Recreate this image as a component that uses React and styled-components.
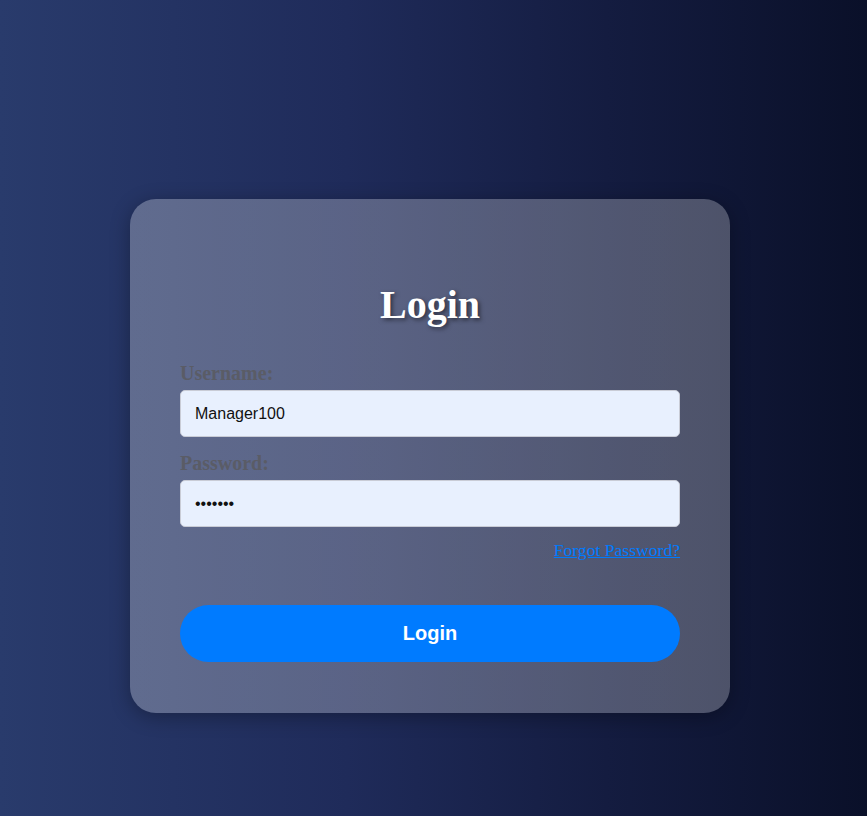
import React from 'react'
import styled, { createGlobalStyle } from 'styled-components';

const GlobalStyle = createGlobalStyle`
    * {
        box-sizing: border-box;
    }
    body {
        margin: 0;
        min-height: 100vh;
        font-family: "Liberation Serif", "Times New Roman", serif;
        background: linear-gradient(to right, #293b6c 0%, #1f2b5a 40%, #141c40 70%, #0a1029 100%);
    }
`;

export default function App() {
    return (
        <>
        <GlobalStyle />
        <Page>
            <Card>
                <Title>Login</Title>
                <Field>
                    <Label htmlFor="username">Username:</Label>
                    <Input id="username" type="text" defaultValue="Manager100" />
                </Field>
                <Field>
                    <Label htmlFor="password">Password:</Label>
                    <Input id="password" type="password" defaultValue="1234567" />
                </Field>
                <Forgot>
                    <a href="#">Forgot Password?</a>
                </Forgot>
                <Button type="button">Login</Button>
            </Card>
        </Page>
        </>
    );
};

const Page = styled.div `
    padding: 199px 0 0 130px;
`;
const Card = styled.div `
    width: 600px;
    padding: 50px 50px 51px;
    border-radius: 26px;
    background: linear-gradient(to right, rgba(255,255,255,0.27), rgba(255,255,255,0.26));
    box-shadow: 0 4px 20px rgba(0, 0, 0, 0.3);
`;
const Title = styled.h2 `
    margin: 33px 0 34px;
    font-size: 40px;
    line-height: 46px;
    font-weight: 700;
    text-align: center;
    color: #fff;
    text-shadow: 2px 2px 4px rgba(0, 0, 0, 0.5);
`;
const Field = styled.div `
    display: flex;
    flex-direction: column;
    margin-bottom: 15px;
`;
const Label = styled.label `
    font-size: 20px;
    line-height: 23px;
    font-weight: 700;
    color: #5a5c66;
    margin-bottom: 5px;
`;
const Input = styled.input `
    width: 100%;
    height: 47px;
    padding: 0 14px;
    border: 1px solid #c9ccd6;
    border-radius: 5px;
    background: #e8f0fe;
    color: #111;
    font-family: "Liberation Sans", Arial, sans-serif;
    font-size: 16px;
    outline: none;
`;
const Forgot = styled.div `
    text-align: right;
    margin-top: -2px;
    line-height: 20px;
    a {
        font-size: 17.6px;
        color: #007bff;
        text-decoration: underline;
    }
`;
const Button = styled.button `
    display: block;
    width: 100%;
    height: 57px;
    margin-top: 44px;
    border: none;
    border-radius: 30px;
    background: #007bff;
    color: #fff;
    font-family: "Liberation Sans", Arial, sans-serif;
    font-size: 20px;
    font-weight: 700;
    cursor: pointer;
`;
